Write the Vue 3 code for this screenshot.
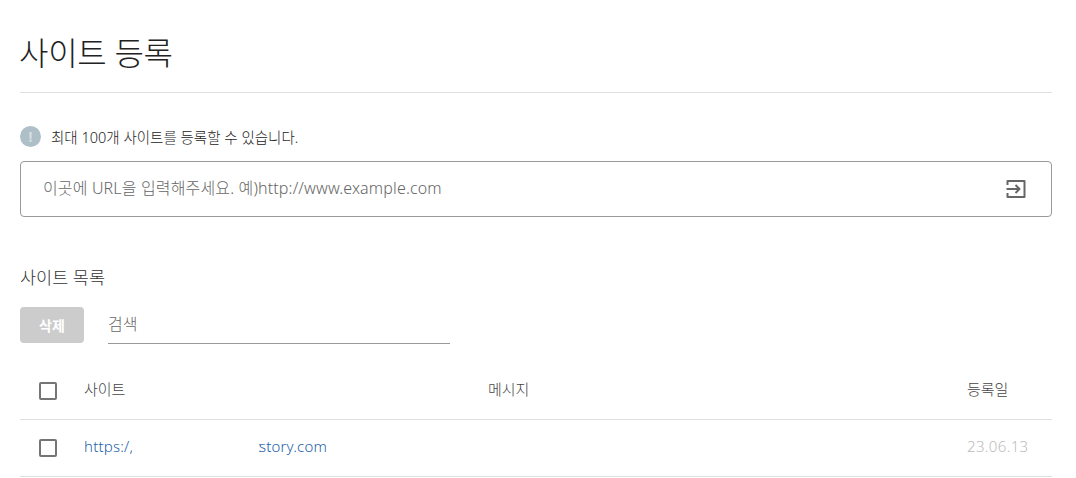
<template>
  <div class="page">
    <h1 class="title"><span class="title-text">사이트 등록</span></h1>

    <div class="notice">
      <span class="notice-icon">!</span>
      <span>최대 100개 사이트를 등록할 수 있습니다.</span>
    </div>

    <div class="url-box">
      <input class="url-input" type="text" placeholder="이곳에 URL을 입력해주세요. 예)http://www.example.com" />
      <svg class="enter-icon" width="24" height="24" viewBox="0 0 24 24" fill="none" stroke="#666" stroke-width="2" stroke-linejoin="round">
        <path d="M3.5 8V4h17v16h-17V16"></path>
        <path d="M2.5 12H15"></path>
        <path d="M11.5 8l4 4-4 4"></path>
      </svg>
    </div>

    <h2 class="subtitle">사이트 목록</h2>

    <div class="tools">
      <button class="delete-btn" disabled>삭제</button>
      <input class="search" type="text" placeholder="검색" />
    </div>

    <div class="row head">
      <span class="check"></span>
      <span class="col-site">사이트</span>
      <span class="col-msg">메시지</span>
      <span class="col-date">등록일</span>
    </div>
    <div class="row" v-for="site in sites" :key="site.date">
      <span class="check"></span>
      <span class="col-site link">
        <span>{{ site.start }}</span><span class="masked">{{ site.end }}</span>
      </span>
      <span class="col-msg"></span>
      <span class="col-date muted">{{ site.date }}</span>
    </div>
  </div>
</template>

<script setup>
const sites = [
  { start: 'https:/,', end: 'story.com', date: '23.06.13' }
]
</script>

<style>
html, body {
  background: #fff;
}
</style>

<style scoped>
.page {
  width: 1076px;
  height: 478px;
  overflow: hidden;
  box-sizing: border-box;
  padding: 0 24px 0 20px;
  font-family: "Noto Sans", "Noto Sans CJK KR", sans-serif;
  color: #333;
}

.title {
  margin: 0;
  height: 93px;
  box-sizing: border-box;
  padding-top: 30px;
  font-size: 32px;
  line-height: 46px;
  font-weight: 300;
  letter-spacing: -0.3px;
  color: #222;
  border-bottom: 1px solid #e0e0e0;
}

.title-text {
  margin-left: -1px;
}

.notice {
  display: flex;
  align-items: center;
  gap: 10px;
  height: 22px;
  margin-top: 32px;
  font-size: 14.5px;
  font-weight: 300;
  color: #222;
}

.notice-icon {
  width: 21px;
  height: 21px;
  border-radius: 50%;
  background: #aebfc8;
  color: #d5e0e5;
  font-size: 14px;
  font-weight: 700;
  line-height: 21px;
  text-align: center;
}

.url-box {
  display: flex;
  align-items: center;
  height: 56px;
  box-sizing: border-box;
  margin-top: 14px;
  padding: 0 23px 0 22px;
  border: 1px solid #999;
  border-radius: 4px;
}

.url-input {
  flex: 1;
  border: none;
  outline: none;
  padding: 0 0 3px;
  font: inherit;
  font-size: 16px;
  font-weight: 300;
  letter-spacing: 0.15px;
}

.url-input::placeholder {
  color: #666;
  opacity: 1;
}

.enter-icon {
  flex-shrink: 0;
}

.subtitle {
  margin: 47px 0 0;
  font-size: 17.5px;
  line-height: 26px;
  font-weight: 300;
  color: #333;
}

.tools {
  display: flex;
  align-items: flex-start;
  gap: 24px;
  margin-top: 17px;
}

.delete-btn {
  width: 64px;
  height: 36px;
  border: none;
  border-radius: 4px;
  background: #ccc;
  color: #fff;
  font: inherit;
  font-size: 14px;
  font-weight: 700;
}

.search {
  width: 342px;
  height: 37px;
  box-sizing: border-box;
  border: none;
  border-bottom: 1px solid #999;
  outline: none;
  padding: 0 0 2px;
  font: inherit;
  font-size: 16px;
  font-weight: 300;
}

.search::placeholder {
  color: #666;
  opacity: 1;
}

.row {
  display: flex;
  align-items: center;
  height: 57px;
  box-sizing: border-box;
  padding-left: 19px;
  border-bottom: 1px solid #e0e0e0;
  font-size: 15px;
  font-weight: 300;
}

.head {
  height: 76px;
  padding-top: 19px;
  color: #444;
}

.check {
  width: 18px;
  height: 18px;
  box-sizing: border-box;
  border: 2px solid #757575;
  border-radius: 2px;
  flex-shrink: 0;
}

.col-site {
  width: 404px;
  margin-left: 27px;
  margin-bottom: 5px;
  flex-shrink: 0;
  line-height: 18px;
}

.col-msg {
  flex: 1;
  margin-bottom: 5px;
}

.col-date {
  width: 85px;
  flex-shrink: 0;
  margin-bottom: 5px;
}

.link {
  color: #1f5fa8;
  letter-spacing: 0.2px;
}

.masked {
  margin-left: 125px;
}

/* 가려진 주소의 끝부분 */
.masked::before {
  content: ":";
  margin-right: -3px;
}

.muted {
  color: #bbb;
  letter-spacing: 0.35px;
}
</style>
